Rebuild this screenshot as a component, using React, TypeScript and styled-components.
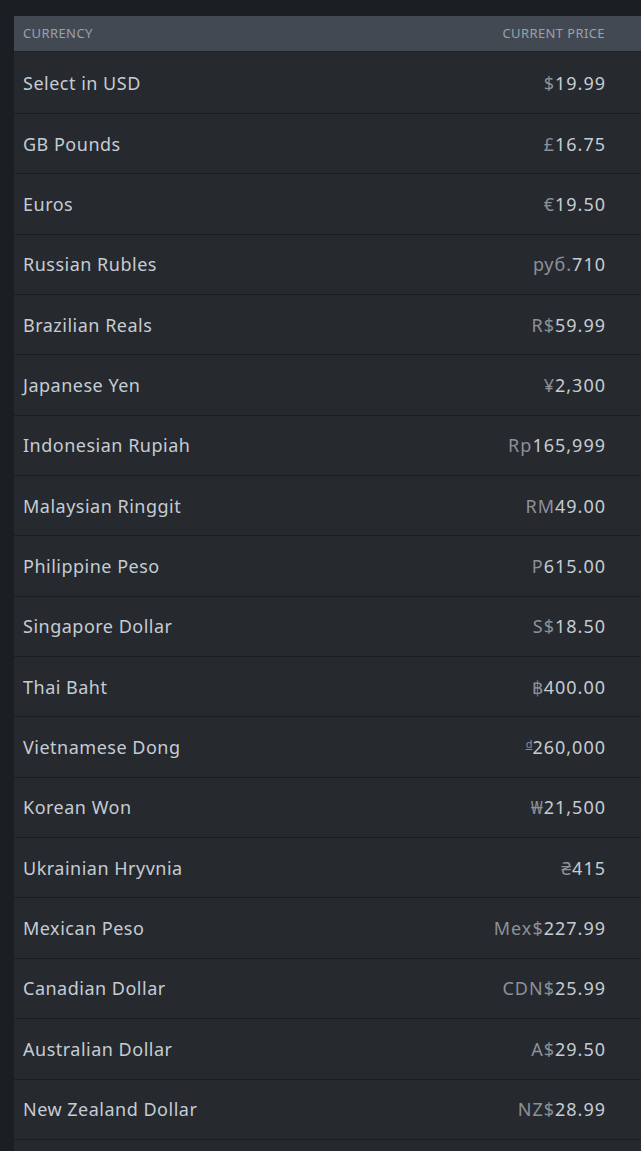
import React from "react";
import styled, { createGlobalStyle } from "styled-components";

const Global = createGlobalStyle`
  html, body { margin: 0; padding: 0; background: #1b1e23; }
  body { font-family: "Noto Sans", "Open Sans", sans-serif; }
`;

const Page = styled.div`
  padding: 16px 0 0 14px;
  min-height: 1151px;
  box-sizing: border-box;
  overflow: hidden;
`;

const Table = styled.div`
  display: flex;
  flex-direction: column;
  width: 627px;
`;

const Header = styled.div`
  display: flex;
  justify-content: space-between;
  align-items: center;
  height: 36px;
  padding: 0 36px 1px 9px;
  background: #434953;
  border-bottom: 1px solid #1e2126;
  color: #98a2ad;
  font-size: 13px;
  letter-spacing: 0.4px;
  text-transform: uppercase;
  box-sizing: border-box;
`;

const Row = styled.div`
  display: flex;
  justify-content: space-between;
  align-items: center;
  height: 60.35px;
  padding: 0 35px 0 9px;
  background: #26292e;
  border-bottom: 1px solid #1c1e22;
  box-sizing: border-box;
  font-size: 18px;
  color: #c5ccd3;

  &:nth-child(2) {
    height: 62px;
  }
`;

const Name = styled.span`
  letter-spacing: 0.5px;
`;

const Price = styled.span`
  color: #c5ccd3;
  letter-spacing: 1px;
`;

const Prefix = styled.span<{ $small?: boolean }>`
  color: #8b9199;
  ${(p) => (p.$small ? "font-size: 11px; vertical-align: 6px; text-decoration: underline; letter-spacing: 0;" : "")}
`;

const rows: [string, string, string, boolean?][] = [
  ["Select in USD", "$", "19.99"],
  ["GB Pounds", "£", "16.75"],
  ["Euros", "€", "19.50"],
  ["Russian Rubles", "руб.", "710"],
  ["Brazilian Reals", "R$", "59.99"],
  ["Japanese Yen", "¥", "2,300"],
  ["Indonesian Rupiah", "Rp", "165,999"],
  ["Malaysian Ringgit", "RM", "49.00"],
  ["Philippine Peso", "P", "615.00"],
  ["Singapore Dollar", "S$", "18.50"],
  ["Thai Baht", "฿", "400.00"],
  ["Vietnamese Dong", "d", "260,000", true],
  ["Korean Won", "₩", "21,500"],
  ["Ukrainian Hryvnia", "₴", "415"],
  ["Mexican Peso", "Mex$", "227.99"],
  ["Canadian Dollar", "CDN$", "25.99"],
  ["Australian Dollar", "A$", "29.50"],
  ["New Zealand Dollar", "NZ$", "28.99"],
  ["", "", ""],
];

export default function App() {
  return (
    <Page>
      <Global />
      <Table>
        <Header>
          <span>Currency</span>
          <span>Current Price</span>
        </Header>
        {rows.map(([n, p, v, s], i) => (
          <Row key={i}>
            <Name>{n}</Name>
            <Price>
              <Prefix $small={s}>{p}</Prefix>
              {v}
            </Price>
          </Row>
        ))}
      </Table>
    </Page>
  );
}
